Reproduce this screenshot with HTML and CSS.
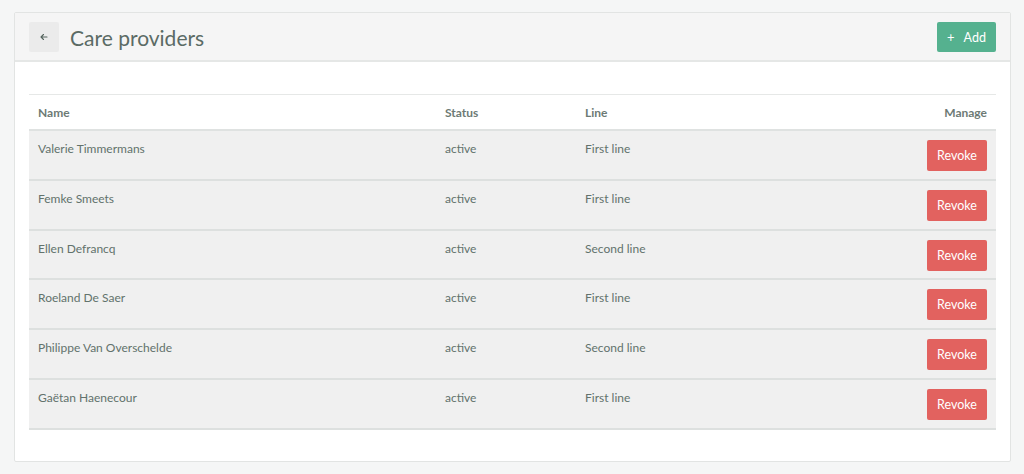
FILE: index.html
```html
<!DOCTYPE html>
<html>
<head>
<meta charset="utf-8">
<link rel="stylesheet" href="styles.css">
</head>
<body>
<div class="card">
  <div class="card-header">
    <div class="title-group">
      <button class="back-btn" aria-label="Back">
        <svg width="10" height="10" viewBox="0 0 10 10"><path d="M8 5H2M4.5 2.5L2 5l2.5 2.5" fill="none" stroke="#55645e" stroke-width="1.1" stroke-linecap="round" stroke-linejoin="round"/></svg>
      </button>
      <h1 class="title">Care providers</h1>
    </div>
    <button class="add-btn"><span class="plus">+</span>Add</button>
  </div>
  <div class="card-body">
    <table class="table">
      <thead>
        <tr><th class="col-name">Name</th><th class="col-status">Status</th><th class="col-line">Line</th><th class="col-manage">Manage</th></tr>
      </thead>
      <tbody>
        <tr><td>Valerie Timmermans</td><td>active</td><td>First line</td><td class="manage"><button class="revoke">Revoke</button></td></tr>
        <tr><td>Femke Smeets</td><td>active</td><td>First line</td><td class="manage"><button class="revoke">Revoke</button></td></tr>
        <tr><td>Ellen Defrancq</td><td>active</td><td>Second line</td><td class="manage"><button class="revoke">Revoke</button></td></tr>
        <tr><td>Roeland De Saer</td><td>active</td><td>First line</td><td class="manage"><button class="revoke">Revoke</button></td></tr>
        <tr><td>Philippe Van Overschelde</td><td>active</td><td>Second line</td><td class="manage"><button class="revoke">Revoke</button></td></tr>
        <tr><td>Gaëtan Haenecour</td><td>active</td><td>First line</td><td class="manage"><button class="revoke">Revoke</button></td></tr>
      </tbody>
    </table>
  </div>
</div>
</body>
</html>
```
FILE: styles.css
```css
html, body {
  margin: 0;
  padding: 0;
}
body {
  background: #f5f6f6;
  font-family: Lato, "Open Sans", sans-serif;
  color: #62726c;
  padding: 12px 13px 12px 14px;
}
.card {
  background: #fff;
  border: 1px solid #e2e4e3;
  border-radius: 2px;
}
.card-header {
  background: #f5f5f5;
  border-bottom: 2px solid #e5e7e6;
  display: flex;
  align-items: center;
  justify-content: space-between;
  padding: 9px 14px 8px 14px;
}
.title-group {
  display: flex;
  align-items: center;
  gap: 11px;
}
.back-btn {
  width: 30px;
  height: 30px;
  border: none;
  border-radius: 2px;
  background: #ebebeb;
  display: flex;
  align-items: center;
  justify-content: center;
  padding: 0;
}
.title {
  margin: 0;
  font-size: 21px;
  font-weight: 400;
  color: #5b6b65;
}
.add-btn {
  height: 30px;
  width: 59px;
  border: none;
  border-radius: 2px;
  background: #55b18f;
  color: #fff;
  font-family: inherit;
  font-size: 12.5px;
  padding: 0;
  display: flex;
  align-items: center;
  justify-content: center;
}
.plus {
  margin-right: 9px;
  font-size: 13px;
}
.card-body {
  padding: 32px 14px 31px 14px;
}
.table {
  width: 100%;
  border-collapse: collapse;
  font-size: 12px;
}
.table thead th {
  text-align: left;
  font-weight: 700;
  color: #6d7a75;
  border-top: 1px solid #e6e8e7;
  border-bottom: 2px solid #dfe2e1;
  height: 34px;
  padding: 0 9px;
}
.table th.col-manage { text-align: right; }
.col-name { width: 389px; }
.col-status { width: 122px; }
.table tbody td {
  background: #f0f0f0;
  border-bottom: 2px solid #dde0df;
  vertical-align: top;
  padding: 10px 9px 0;
  height: 37.8px;
}
.table tbody td.manage {
  text-align: right;
  padding-top: 9px;
}
.revoke {
  border: none;
  border-radius: 2px;
  background: #e2625f;
  color: #fff;
  font-family: inherit;
  font-size: 12.5px;
  width: 60px;
  height: 31px;
  padding: 0;
}
```
